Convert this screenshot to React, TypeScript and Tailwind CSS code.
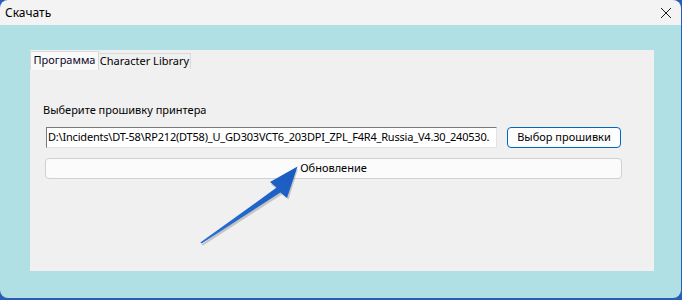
import React from "react";

const font = { fontFamily: '"Noto Sans", "Open Sans", sans-serif' };

function Arrow() {
  return (
    <svg className="pointer-events-none absolute left-0 top-0" width="682" height="300" viewBox="0 0 682 300">
      <defs>
        <linearGradient id="ag" x1="200" y1="243" x2="297" y2="167" gradientUnits="userSpaceOnUse">
          <stop offset="0" stopColor="#2a6fd6" />
          <stop offset="1" stopColor="#1a5bbf" />
        </linearGradient>
      </defs>
      <polygon
        points="201.5,244.5 278,190 271,184.5 298,169 288.5,199.5 282,194.5 203,245.5"
        fill="#000"
        opacity="0.18"
      />
      <polygon
        points="200.3,242.6 276.6,187.6 270,182 297.5,166.5 287,198 280.4,192.4 201.7,243.6"
        fill="url(#ag)"
      />
    </svg>
  );
}

export default function App() {
  return (
    <div className="relative h-[300px] w-[682px] overflow-hidden bg-[#2a5db4] text-[11px] text-black" style={font}>
      <div className="flex h-[298px] w-[681px] flex-col overflow-hidden rounded-[8px]">
        <div className="flex h-[25px] shrink-0 items-center justify-between bg-[#f3f3f3] pl-[5px] pr-[9px]">
          <span className="text-[12px] leading-none">Скачать</span>
          <svg width="12" height="12" viewBox="0 0 12 12">
            <path d="M1 1 L11 11 M11 1 L1 11" stroke="#1a1a1a" strokeWidth="1" />
          </svg>
        </div>
        <div className="flex-1 bg-[#b0dfe4] px-[30px] pt-[25px]">
          <div className="flex h-[221px] w-[624px] flex-col bg-[#f0f0f0]">
            <div className="flex h-[20px] items-end whitespace-nowrap">
              <div className="flex h-[19px] w-[69px] items-center justify-center border-x border-t border-[#dadada] bg-[#f9f9f9] pb-[1px] text-[#0a0a2a]">
                Программа
              </div>
              <div className="mb-[1px] flex h-[16px] w-[92px] items-center justify-center border-r border-t border-[#dadada] bg-[#f0f0f0]">
                Character Library
              </div>
            </div>
            <div className="flex flex-col px-[16px]">
              <div className="ml-[-3px] mt-[34px] leading-none">Выберите прошивку принтера</div>
              <div className="mt-[11px] flex items-center">
                <div className="flex h-[21px] w-[451px] items-center overflow-hidden whitespace-nowrap border border-[#7a7a7a] border-b-[#e3e3e3] border-r-[#e3e3e3] bg-white pl-[1px] tracking-[-0.2px]">
                  D:\Incidents\DT-58\RP212(DT58)_U_GD303VCT6_203DPI_ZPL_F4R4_Russia_V4.30_240530.
                </div>
                <button className="ml-[10px] mt-[1px] flex h-[21px] w-[114px] items-center justify-center whitespace-nowrap rounded-[4px] border border-[#0067c0] bg-[#fdfdfd]">
                  Выбор прошивки
                </button>
              </div>
              <button className="ml-[-1px] mt-[10px] flex h-[21px] w-[577px] items-center justify-center rounded-[4px] border border-[#d0d0d0] bg-[#fbfbfb]">
                Обновление
              </button>
            </div>
          </div>
        </div>
      </div>
      <Arrow />
    </div>
  );
}
